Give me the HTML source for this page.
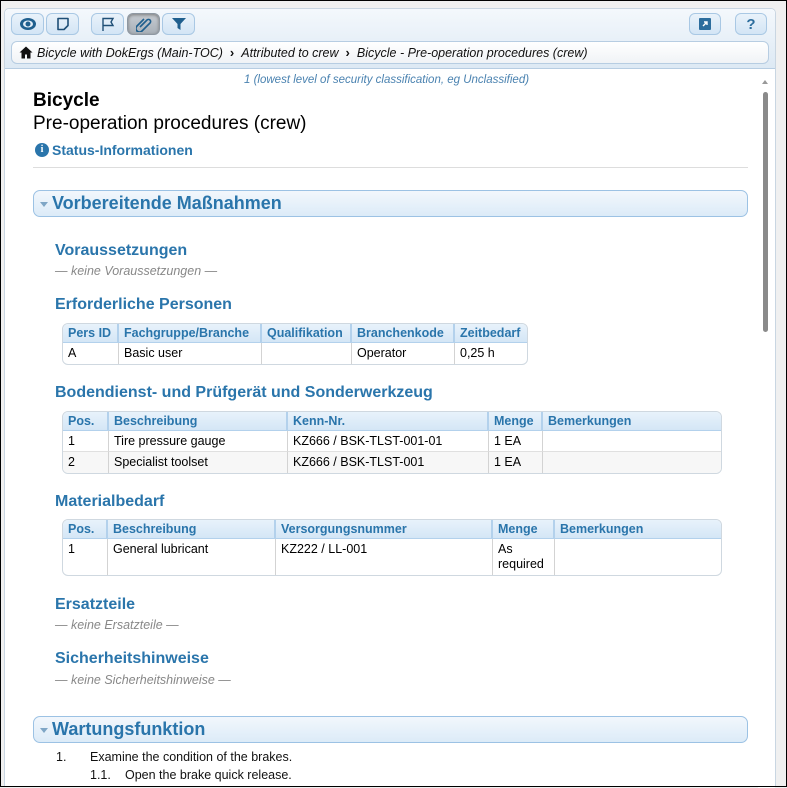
<!DOCTYPE html>
<html><head><meta charset="utf-8"><style>
*{box-sizing:border-box;margin:0;padding:0}
body{width:787px;height:787px;overflow:hidden;background:#f0f0f0;font-family:"Liberation Sans",Arial,sans-serif;position:relative}
.frame{position:absolute;left:0;top:0;width:787px;height:787px;border:1px solid #000;border-width:1px 1px 1px 1px}
.panel{position:absolute;left:4px;top:8px;width:772px;height:779px;background:#fff;border:1px solid #c9d6e2;border-radius:5px 5px 0 0}
.hdr{position:absolute;left:0;top:0;width:770px;height:60px;background:linear-gradient(#f4f8fc,#dde9f4);border-bottom:1px solid #b7cde2;border-radius:5px 5px 0 0}
.btn{position:absolute;top:4px;height:22px;border:1px solid #a9c8e4;border-radius:6px;background:linear-gradient(#e9f2fa,#d3e5f5);display:flex;align-items:center;justify-content:center}
.btn.on{background:linear-gradient(#c7ccd2,#a8b0b8);border-color:#8e98a2;box-shadow:inset 0 1px 3px #777}
.bc{position:absolute;left:6px;top:32px;width:758px;height:23px;border:1px solid #b7cde2;border-radius:6px;background:linear-gradient(#fff,#f0f3f6);font-size:12.5px;font-style:italic;color:#111;display:flex;align-items:center;padding-left:7px}
.bc .s{font-style:normal;margin:0 7px;font-weight:bold;font-size:13px}
.sb{position:absolute;left:753px;top:61px;width:17px;height:718px;background:#fff}
.thumb{position:absolute;left:5px;top:22px;width:5px;height:240px;background:#8a8a8a;border-radius:3px}
.c{position:absolute;color:#111}
.sec{position:absolute;left:33px;width:715px;height:27px;border:1px solid #9cc2e4;border-radius:7px;background:linear-gradient(#f2f7fc,#dcebf8);color:#2a75ab;font-weight:bold;font-size:18px;padding-left:18px;line-height:25px}
.sec:before{content:"";position:absolute;left:6px;top:11px;border:4px solid transparent;border-top:5px solid #7fa6c6;border-bottom:0}
h3{position:absolute;left:55px;color:#2a75ab;font-size:16px;font-weight:bold}
.none{position:absolute;left:55px;color:#888;font-style:italic;font-size:12.5px}
table{position:absolute;border-collapse:separate;border-spacing:0;font-size:12.5px;border:1px solid #cfd8e0;border-radius:6px;overflow:hidden}
th{background:linear-gradient(#e8f2fb,#d4e6f6);color:#2a75ab;font-weight:bold;text-align:left;padding:0 5px;height:19px;border-right:2px solid #b3d1ec;border-bottom:1px solid #b3d1ec}
td{padding:0 5px;height:21px;border-right:1px solid #d3d3d3;border-bottom:1px solid #e0e0e0;vertical-align:top;padding-top:3px}
tr:last-child td{border-bottom:0}
th:last-child,td:last-child{border-right:0}
tr.alt td{background:#f7f7f7}
</style></head><body>
<div class="panel">
 <div class="hdr">
  <div class="btn" style="left:6px;width:33px"><svg width="18" height="14" viewBox="0 0 18 14"><ellipse cx="9" cy="7" rx="8" ry="6" fill="#1f5f8e"/><ellipse cx="9" cy="7" rx="5" ry="3.5" fill="#e3eef8"/><circle cx="9" cy="7" r="2.5" fill="#1f5f8e"/></svg></div>
  <div class="btn" style="left:41px;width:33px"><svg width="14" height="14" viewBox="0 0 14 14"><path d="M2 1.5h10v7l-4 4H2z" fill="none" stroke="#1f4f76" stroke-width="1.6" stroke-linejoin="round"/></svg></div>
  <div class="btn" style="left:86px;width:33px"><svg width="14" height="15" viewBox="0 0 14 15"><path d="M2 14V1.5h10l-2 3.5 2 3.5H2" fill="none" stroke="#1f4f76" stroke-width="1.4"/></svg></div>
  <div class="btn on" style="left:122px;width:33px"><svg width="16" height="16" viewBox="0 0 16 16"><path d="M4 12l7-7a2 2 0 0 1 3 3l-8 8a3.5 3.5 0 0 1-5-5l7-7" fill="none" stroke="#1f5f8e" stroke-width="1.6" transform="translate(0,-1)"/></svg></div>
  <div class="btn" style="left:157px;width:33px"><svg width="16" height="14" viewBox="0 0 16 14"><path d="M1 1h14l-5.5 6v6l-3-2V7z" fill="#1f5f8e"/></svg></div>
  <div class="btn" style="left:684px;width:32px"><svg width="12" height="12" viewBox="0 0 12 12"><rect width="12" height="12" rx="1" fill="#2c6d9d"/><path d="M4 8l4-4M5 4h3v3" stroke="#fff" stroke-width="1.4" fill="none"/></svg></div>
  <div class="btn" style="left:730px;width:32px;color:#2c6d9d;font-weight:bold;font-size:15px">?</div>
  <div class="bc"><svg width="14" height="13" viewBox="0 0 14 13" style="margin-right:4px"><path d="M7 0.5L0.5 6.5h2v6h3.5v-4h2v4h3.5v-6h2z" fill="#111"/></svg>Bicycle with DokErgs (Main-TOC)<span class="s">›</span>Attributed to crew<span class="s">›</span>Bicycle - Pre-operation procedures (crew)</div>
 </div>
 <div class="sb"><div style="position:absolute;left:4px;top:10px;border:3px solid transparent;border-bottom:4px solid #999;border-top:0"></div><div class="thumb"></div></div>
</div>
<div class="frame"></div>
<div class="c" style="left:244px;top:74px;font-size:11.5px;font-style:italic;color:#4a82b0">1 (lowest level of security classification, eg Unclassified)</div>
<div class="c" style="left:33px;top:90px;font-size:19px;font-weight:bold;color:#000">Bicycle</div>
<div class="c" style="left:33px;top:113px;font-size:19px;color:#000">Pre-operation procedures (crew)</div>
<div class="c" style="left:35px;top:142px;font-size:14px;font-weight:bold;color:#2a75ab;display:flex;align-items:center"><span style="display:inline-block;width:14px;height:14px;border-radius:50%;background:#2a75ab;color:#fff;font-size:10px;text-align:center;line-height:14px;margin-right:3px;font-family:'Liberation Serif'">i</span>Status-Informationen</div>
<div style="position:absolute;left:33px;top:167px;width:715px;height:1px;background:#ddd"></div>
<div class="sec" style="top:190px">Vorbereitende Maßnahmen</div>
<h3 style="top:242px">Voraussetzungen</h3>
<div class="none" style="top:264px">— keine Voraussetzungen —</div>
<h3 style="top:296px">Erforderliche Personen</h3>
<table style="left:62px;top:323px;width:466px">
<tr><th style="width:56px">Pers ID</th><th style="width:143px">Fachgruppe/Branche</th><th style="width:90px">Qualifikation</th><th style="width:103px">Branchenkode</th><th>Zeitbedarf</th></tr>
<tr><td>A</td><td>Basic user</td><td></td><td>Operator</td><td>0,25 h</td></tr></table>
<h3 style="top:384px">Bodendienst- und Prüfgerät und Sonderwerkzeug</h3>
<table style="left:62px;top:411px;width:660px">
<tr><th style="width:46px">Pos.</th><th style="width:179px">Beschreibung</th><th style="width:201px">Kenn-Nr.</th><th style="width:54px">Menge</th><th>Bemerkungen</th></tr>
<tr><td>1</td><td>Tire pressure gauge</td><td>KZ666 / BSK-TLST-001-01</td><td>1 EA</td><td></td></tr>
<tr class="alt"><td>2</td><td>Specialist toolset</td><td>KZ666 / BSK-TLST-001</td><td>1 EA</td><td></td></tr></table>
<h3 style="top:493px">Materialbedarf</h3>
<table style="left:62px;top:519px;width:660px">
<tr><th style="width:45px">Pos.</th><th style="width:168px">Beschreibung</th><th style="width:217px">Versorgungsnummer</th><th style="width:62px">Menge</th><th>Bemerkungen</th></tr>
<tr><td style="height:36px">1</td><td>General lubricant</td><td>KZ222 / LL-001</td><td style="line-height:15px">As<br>required</td><td></td></tr></table>
<h3 style="top:596px">Ersatzteile</h3>
<div class="none" style="top:618px">— keine Ersatzteile —</div>
<h3 style="top:650px">Sicherheitshinweise</h3>
<div class="none" style="top:673px">— keine Sicherheitshinweise —</div>
<div class="sec" style="top:716px">Wartungsfunktion</div>
<div class="c" style="left:56px;top:750px;font-size:12.5px">1.</div>
<div class="c" style="left:90px;top:750px;font-size:12.5px">Examine the condition of the brakes.</div>
<div class="c" style="left:90px;top:768px;font-size:12.5px">1.1.</div>
<div class="c" style="left:125px;top:768px;font-size:12.5px">Open the brake quick release.</div>
</body></html>
